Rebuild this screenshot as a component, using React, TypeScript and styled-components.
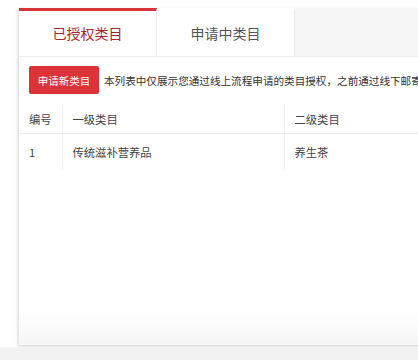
import React, { useState } from 'react';
import styled, { createGlobalStyle } from 'styled-components';

const GlobalStyle = createGlobalStyle`
  html, body {
    margin: 0;
    padding: 0;
    background: #ffffff;
    font-family: "Noto Sans CJK SC", "Liberation Sans", sans-serif;
    overflow: hidden;
  }
`;

const Page = styled.div`
  width: 418px;
  height: 360px;
  display: flex;
  flex-direction: column;
  background: #f2f2f2;
`;

const Main = styled.div`
  height: 347px;
  background: #ffffff;
  padding: 8px 0 0 18px;
  box-sizing: border-box;
  display: flex;
  overflow: hidden;
`;

const Card = styled.div`
  width: 440px;
  flex-shrink: 0;
  height: 337px;
  background: linear-gradient(#ffffff 0, #ffffff 300px, #f6f6f6 337px);
  box-shadow: 0 1px 3px rgba(0, 0, 0, 0.2);
  border-left: 1px solid #e6e6e6;
  display: flex;
  flex-direction: column;
  overflow: hidden;
`;

const TabBar = styled.div`
  display: flex;
  height: 48px;
  background: #f7f7f7;
  border-bottom: 1px solid #ececec;
`;

const Tab = styled.div<{ $active?: boolean }>`
  width: 138px;
  box-sizing: border-box;
  display: flex;
  align-items: center;
  justify-content: center;
  font-size: 14px;
  background: #ffffff;
  color: ${(p) => (p.$active ? '#a3282b' : '#555555')};
  border-top: 3px solid ${(p) => (p.$active ? '#d7343a' : '#ffffff')};
  border-right: 1px solid #ececec;
  padding-bottom: 2px;
  cursor: pointer;
`;

const Toolbar = styled.div`
  display: flex;
  align-items: center;
  gap: 5px;
  padding: 9px 10px 0 10px;
  white-space: nowrap;
`;

const PrimaryButton = styled.button`
  flex-shrink: 0;
  height: 28px;
  width: 70px;
  padding: 0;
  border: none;
  border-radius: 2px;
  background: #dc3338;
  color: #ffffff;
  font-family: inherit;
  font-size: 10.5px;
  cursor: pointer;
`;

const Notice = styled.span`
  font-size: 10.6px;
  color: #333333;
`;

const Table = styled.table`
  margin-top: 10px;
  border-collapse: collapse;
  width: 440px;
  font-size: 11.3px;
  color: #444444;

  th, td {
    text-align: left;
    font-weight: normal;
    padding: 0 0 0 10px;
    height: 29px;
  }

  th {
    border-bottom: 1px solid #eeeeee;
  }

  th + th, td + td {
    border-left: 1px solid #f2f2f2;
  }

  td {
    height: 36px;
  }
`;

const App: React.FC = () => {
  const [tab, setTab] = useState(0);

  return (
    <Page>
      <GlobalStyle />
      <Main>
        <Card>
          <TabBar>
            <Tab $active={tab === 0} onClick={() => setTab(0)}>已授权类目</Tab>
            <Tab $active={tab === 1} onClick={() => setTab(1)}>申请中类目</Tab>
          </TabBar>
          <Toolbar>
            <PrimaryButton>申请新类目</PrimaryButton>
            <Notice>本列表中仅展示您通过线上流程申请的类目授权，之前通过线下邮寄资料申请的类目不在此展示</Notice>
          </Toolbar>
          <Table>
            <colgroup>
              <col style={{ width: 43 }} />
              <col style={{ width: 222 }} />
              <col />
            </colgroup>
            <thead>
              <tr>
                <th>编号</th>
                <th>一级类目</th>
                <th>二级类目</th>
              </tr>
            </thead>
            <tbody>
              <tr>
                <td>1</td>
                <td>传统滋补营养品</td>
                <td>养生茶</td>
              </tr>
            </tbody>
          </Table>
        </Card>
      </Main>
    </Page>
  );
};

export default App;
